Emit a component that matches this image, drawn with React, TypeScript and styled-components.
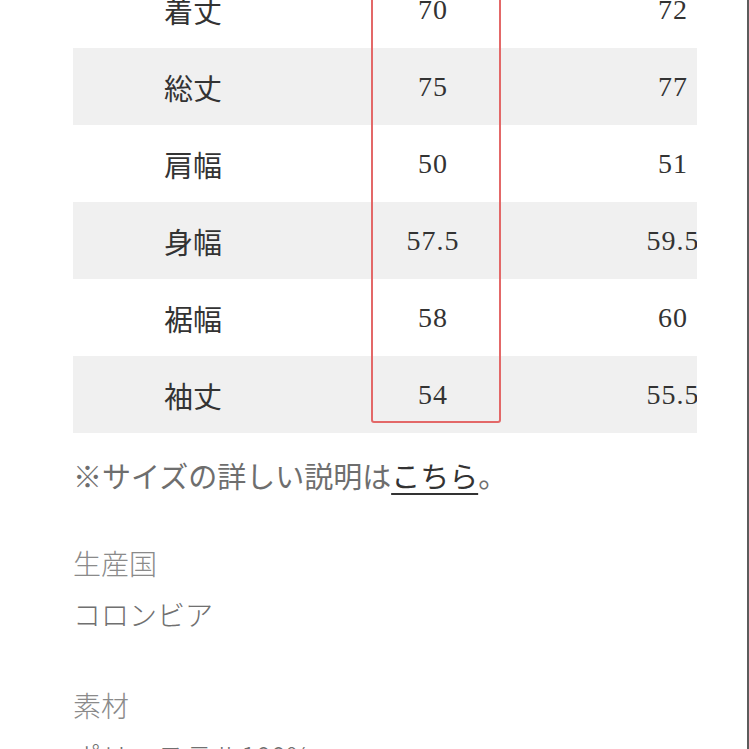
import React from 'react'
import styled, { createGlobalStyle } from 'styled-components'

const GlobalStyle = createGlobalStyle`
  html, body {
    margin: 0;
    padding: 0;
    background: #fff;
  }
`

const sans = `"Noto Sans CJK JP", "Noto Sans", sans-serif`
const serif = `"Liberation Serif", "Noto Sans CJK JP", serif`

type Row = { label: string; values: string[] }

const rows: Row[] = [
  { label: '着丈', values: ['70', '72'] },
  { label: '総丈', values: ['75', '77'] },
  { label: '肩幅', values: ['50', '51'] },
  { label: '身幅', values: ['57.5', '59.5'] },
  { label: '裾幅', values: ['58', '60'] },
  { label: '袖丈', values: ['54', '55.5'] },
]

function App() {
  return (
    <>
      <GlobalStyle />
      <Page>
        <TableScroll>
          <SizeTable>
            <tbody>
              {rows.map((row, i) => (
                <SizeRow key={row.label} $shaded={i % 2 === 1}>
                  <LabelCell>{row.label}</LabelCell>
                  {row.values.map((v, j) => (
                    <ValueCell key={j}>{v}</ValueCell>
                  ))}
                </SizeRow>
              ))}
            </tbody>
          </SizeTable>
          <Highlight />
        </TableScroll>

        <Note>
          ※サイズの詳しい説明は<NoteLink href="#">こちら</NoteLink>。
        </Note>

        <SpecList>
          <SpecTerm>生産国</SpecTerm>
          <SpecValue>コロンビア</SpecValue>
          <SpecTerm>素材</SpecTerm>
          <SpecValue>ポリエステル100%</SpecValue>
        </SpecList>
      </Page>
    </>
  )
}

export default App

const Page = styled.div`
  box-sizing: border-box;
  width: 749px;
  height: 749px;
  overflow: hidden;
  padding-left: 73px;
  border-right: 2px solid #5c5c5c;
`

const TableScroll = styled.div`
  position: relative;
  width: 624px;
  margin-top: -29px;
  overflow: hidden;
`

const SizeTable = styled.table`
  width: 720px;
  border-collapse: collapse;
  table-layout: fixed;
`

const SizeRow = styled.tr<{ $shaded: boolean }>`
  height: 77px;
  background: ${p => (p.$shaded ? '#f0f0f0' : '#fff')};
`

const LabelCell = styled.td`
  width: 240px;
  padding: 0;
  text-align: center;
  font-family: ${sans};
  font-size: 29px;
  color: #333;
`

const ValueCell = styled.td`
  width: 240px;
  padding: 0;
  text-align: center;
  font-family: ${serif};
  font-size: 28px;
  letter-spacing: 1px;
  color: #333;
`

const Highlight = styled.div`
  position: absolute;
  top: -4px;
  left: 298px;
  width: 130px;
  height: 456px;
  box-sizing: border-box;
  border: 2px solid #e36868;
  border-radius: 3px;
  pointer-events: none;
`

const Note = styled.p`
  margin: 22px 0 0;
  font-family: ${sans};
  font-size: 29px;
  line-height: 40px;
  color: #6e6e6e;
`

const NoteLink = styled.a`
  color: #333;
  text-decoration: underline;
  text-underline-offset: 5px;
  text-decoration-thickness: 2px;
`

const SpecList = styled.dl`
  margin: 48px 0 0;
`

const SpecTerm = styled.dt`
  margin: 0;
  font-family: ${sans};
  font-weight: 300;
  font-size: 28px;
  line-height: 40px;
  color: #8a8a8a;

  & + dd + dt {
    margin-top: 51px;
  }
`

const SpecValue = styled.dd`
  margin: 11px 0 0;
  font-family: ${sans};
  font-weight: 300;
  font-size: 28px;
  line-height: 40px;
  color: #707070;
`
